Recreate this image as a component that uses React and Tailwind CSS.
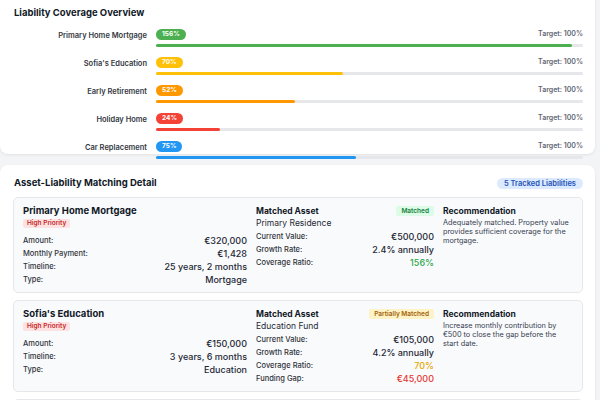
import React from "react";

const coverage = [
  { name: "Primary Home Mortgage", pct: 156, bg: "bg-[#4caf50]" },
  { name: "Sofia's Education", pct: 70, bg: "bg-[#ffc107]" },
  { name: "Early Retirement", pct: 52, bg: "bg-[#ff9800]" },
  { name: "Holiday Home", pct: 24, bg: "bg-[#f44336]" },
  { name: "Car Replacement", pct: 75, bg: "bg-[#2196f3]" },
];

const matches = [
  {
    title: "Primary Home Mortgage",
    details: [
      ["Amount:", "€320,000"],
      ["Monthly Payment:", "€1,428"],
      ["Timeline:", "25 years, 2 months"],
      ["Type:", "Mortgage"],
    ],
    status: "Matched",
    statusCls: "bg-[#dcfce7] text-[#15803d]",
    asset: "Primary Residence",
    assetRows: [
      ["Current Value:", "€500,000", "text-[#1f2937]"],
      ["Growth Rate:", "2.4% annually", "text-[#1f2937]"],
      ["Coverage Ratio:", "156%", "text-[#2fa84f] font-bold"],
    ],
    rec: ["Adequately matched. Property value", "provides sufficient coverage for the", "mortgage."],
  },
  {
    title: "Sofia's Education",
    details: [
      ["Amount:", "€150,000"],
      ["Timeline:", "3 years, 6 months"],
      ["Type:", "Education"],
    ],
    status: "Partially Matched",
    statusCls: "bg-[#fef3c7] text-[#a16207]",
    asset: "Education Fund",
    assetRows: [
      ["Current Value:", "€105,000", "text-[#1f2937]"],
      ["Growth Rate:", "4.2% annually", "text-[#1f2937]"],
      ["Coverage Ratio:", "70%", "text-[#e6a800] font-bold"],
      ["Funding Gap:", "€45,000", "text-[#e53935] font-bold"],
    ],
    rec: ["Increase monthly contribution by", "€500 to close the gap before the", "start date."],
  },
];

function Row({ label, value, cls = "text-[#1f2937]" }) {
  return (
    <div className="flex h-[13px] items-center justify-between">
      <span className="text-[7.5px] font-medium text-[#30343b]">{label}</span>
      <span className={`text-[9px] font-medium ${cls}`}>{value}</span>
    </div>
  );
}

export default function App() {
  return (
    <div className="min-h-screen bg-[#f3f4f6] pr-[5px] font-['Inter',sans-serif] text-[#111827]">
      <div className="-mt-[13px] h-[167px] rounded-lg bg-white pl-[14px] pr-[12px] pt-[16px] shadow-[0_1px_3px_rgba(0,0,0,0.08)]">
        <h2 className="text-[9.5px] font-bold leading-[20px]">Liability Coverage Overview</h2>
        <div className="mt-[6px] flex flex-col gap-[10px]">
          {coverage.map((c) => (
            <div key={c.name} className="flex items-start gap-[9px]">
              <div className="w-[133px] pt-[2px] text-right text-[7.5px] font-semibold leading-[10px] text-[#333842]">
                {c.name}
              </div>
              <div className="flex-1">
                <div className="flex h-[11px] items-center justify-between">
                  <span className={`rounded-full px-[6px] text-[6.5px] font-bold leading-[11px] text-white ${c.bg}`}>
                    {c.pct}%
                  </span>
                  <span className="text-[7px] font-semibold text-[#5f6673]">Target: 100%</span>
                </div>
                <div className="mt-[4px] h-[3px] rounded-full bg-[#e5e7eb]">
                  <div
                    className={`h-full rounded-full ${c.bg}`}
                    style={{ width: `${Math.min((c.pct / 160) * 100, 100)}%` }}
                  />
                </div>
              </div>
            </div>
          ))}
        </div>
      </div>

      <div className="mt-[11px] rounded-lg bg-white pb-4 pl-[13px] pr-[12px] pt-[12px] shadow-[0_1px_3px_rgba(0,0,0,0.08)]">
        <div className="flex h-[12px] items-center justify-between">
          <h2 className="pl-[1px] text-[9.5px] font-bold">Asset-Liability Matching Detail</h2>
          <span className="rounded-full bg-[#dbeafe] px-[7px] text-[7.5px] font-semibold leading-[11px] text-[#2451b8]">
            5 Tracked Liabilities
          </span>
        </div>

        <div className="mt-[8px] flex flex-col gap-[7px]">
          {matches.map((m) => (
            <div
              key={m.title}
              className="grid grid-cols-[224px_178px_1fr] gap-x-[9px] rounded-[5px] border border-[#e5e7eb] bg-[#f9fafb] px-[9px] pb-[6px] pt-[7px]"
            >
              <div>
                <div className="text-[9.5px] font-bold leading-[12px]">{m.title}</div>
                <div className="mt-[2px] flex">
                  <span className="rounded-[2px] bg-[#fee2e2] px-[4px] text-[6.5px] font-semibold leading-[9px] text-[#c62828]">
                    High Priority
                  </span>
                </div>
                <div className="mt-[6px]">
                  {m.details.map(([l, v]) => (
                    <Row key={l} label={l} value={v} />
                  ))}
                </div>
              </div>

              <div>
                <div className="flex h-[12px] items-center justify-between">
                  <span className="text-[8.5px] font-bold">Matched Asset</span>
                  <span className={`rounded-[2px] px-[5px] text-[6.5px] font-semibold leading-[10px] ${m.statusCls}`}>
                    {m.status}
                  </span>
                </div>
                <div className="text-[8.5px] leading-[12px] text-[#1f2937]">{m.asset}</div>
                <div className="mt-[1px]">
                  {m.assetRows.map(([l, v, cls]) => (
                    <Row key={l} label={l} value={v} cls={cls} />
                  ))}
                </div>
              </div>

              <div>
                <div className="text-[8.5px] font-bold leading-[12px]">Recommendation</div>
                <p className="mt-[1px] text-[7.3px] leading-[9px] text-[#374151]">
                  {m.rec.map((line, i) => (
                    <span key={i} className="block whitespace-nowrap">
                      {line}
                    </span>
                  ))}
                </p>
              </div>
            </div>
          ))}
          <div className="h-[60px] rounded-[5px] border border-[#e5e7eb] bg-[#f9fafb]" />
        </div>
      </div>
    </div>
  );
}
